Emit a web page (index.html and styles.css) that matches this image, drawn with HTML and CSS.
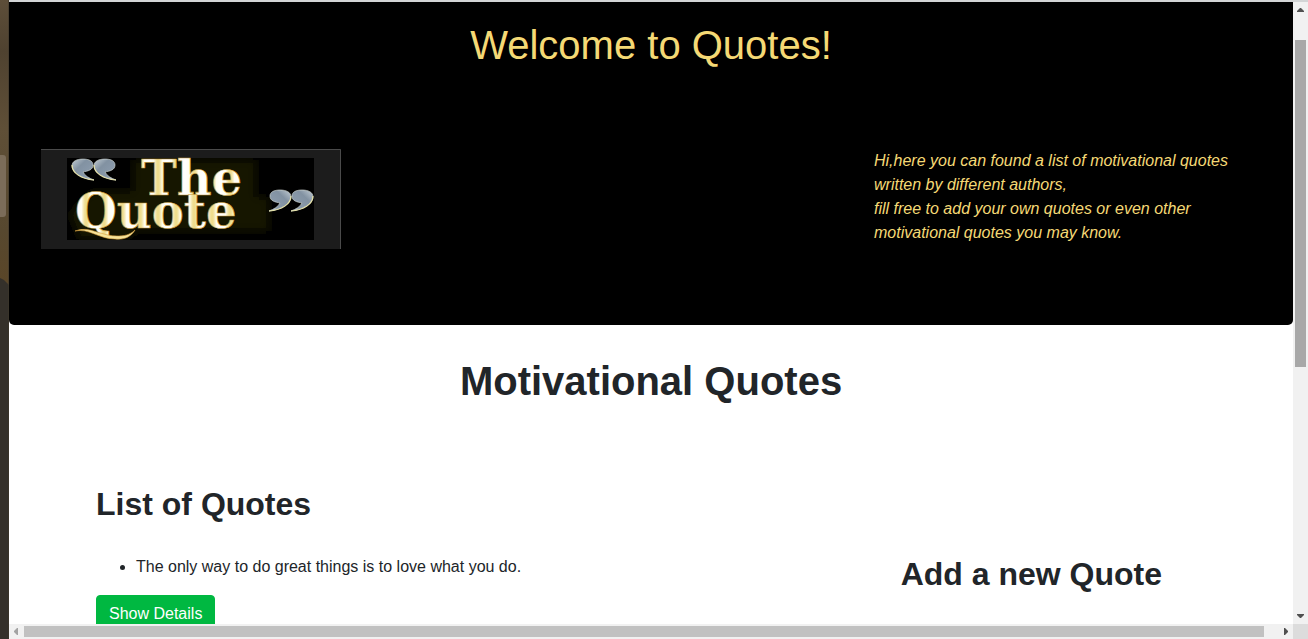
FILE: index.html
```html
<!DOCTYPE html>
<html lang="en">
<head>
<meta charset="utf-8">
<title>Quotes</title>
<link rel="stylesheet" href="styles.css">
</head>
<body>
<div class="desktop">
  <svg class="wallpaper" viewBox="0 0 9 639" preserveAspectRatio="none" aria-hidden="true">
    <defs>
      <linearGradient id="wall" x1="0" y1="0" x2="0" y2="1">
        <stop offset="0" stop-color="#5d4e39"/>
        <stop offset=".08" stop-color="#4f4230"/>
        <stop offset=".2" stop-color="#5f4f37"/>
        <stop offset=".36" stop-color="#57482f"/>
        <stop offset=".44" stop-color="#5a4628"/>
      </linearGradient>
    </defs>
    <rect width="9" height="639" fill="url(#wall)"/>
    <path d="M0 278L4 280L9 285V639H0Z" fill="#34302a"/>
    <path d="M0 155H3Q6 155 6 158V214Q6 217 3 217H0Z" fill="#7b6c59"/>
    <path d="M8 0H9V639H8Z" fill="#3e372b" opacity=".6"/>
  </svg>
  <div class="browser">
    <main class="page">
      <header class="hero">
        <h1 class="hero-title">Welcome to Quotes!</h1>
        <div class="hero-row">
          <svg class="logo" viewBox="0 0 300 100" role="img" aria-label="The Quote">
            <defs>
              <linearGradient id="gold" x1="0" y1="0" x2="9" y2="0" gradientUnits="userSpaceOnUse" spreadMethod="reflect">
                <stop offset="0" stop-color="#ffffff"/>
                <stop offset=".5" stop-color="#fffdf0"/>
                <stop offset=".8" stop-color="#f1e2a0"/>
                <stop offset="1" stop-color="#eedb88"/>
              </linearGradient>
              <linearGradient id="steel" x1="0" y1="0" x2="1" y2="1">
                <stop offset="0" stop-color="#c3cdd4"/>
                <stop offset=".35" stop-color="#8292a2"/>
                <stop offset=".75" stop-color="#8b9bac"/>
                <stop offset="1" stop-color="#e4e8ea"/>
              </linearGradient>
              <filter id="glow" x="-20%" y="-30%" width="140%" height="160%">
                <feGaussianBlur stdDeviation="4"/>
              </filter>
              <clipPath id="plate"><rect x="26" y="9" width="247" height="82"/></clipPath>
              <g id="mark">
                <path d="M1 8C1 3 6 1 12 1C18 1 22 3 22 7C22 12 17 13 12 14C14 18 18 20 23 22C12 21 1 15 1 8Z" fill="url(#steel)" stroke="#c9d0cb" stroke-width=".7"/>
                <path d="M1 7C1 15 10 21 23 22" fill="none" stroke="#e6e2a8" stroke-width="1.2"/>
              </g>
            </defs>
            <rect width="300" height="100" fill="#1c1c1c"/>
            <path d="M0 .5H299.5V100" fill="none" stroke="#4a4a4a"/>
            <rect x="26" y="9" width="247" height="82" fill="#000"/>
            <g clip-path="url(#plate)">
              <path d="M92 11H215V48H228V82H96L86 90H38L28 65L50 42H92Z" fill="#171602" filter="url(#glow)"/>
              <use href="#mark" x="30" y="9"/>
              <use href="#mark" x="52" y="9"/>
              <use href="#mark" transform="translate(251 40) scale(-1 1)"/>
              <use href="#mark" transform="translate(273 40) scale(-1 1)"/>
            </g>
            <g class="logo-text">
              <text x="100" y="46">The</text>
              <text x="34" y="79">Quote</text>
            </g>
            <path d="M34 82C48 76 61 88 78 87C86 87 91 84 94 81C90 88 83 91 74 90C58 90 48 79 34 82Z" fill="#f7e49a" stroke="#d39c3b" stroke-width=".6"/>
          </svg>
          <p class="intro">Hi,here you can found a list of motivational quotes written by different authors,<br>fill free to add your own quotes or even other motivational quotes you may know.</p>
        </div>
      </header>
      <h2 class="page-title">Motivational Quotes</h2>
      <div class="columns">
        <section class="quotes">
          <h3 class="section-title">List of Quotes</h3>
          <ul class="quote-list">
            <li>The only way to do great things is to love what you do.</li>
          </ul>
          <button class="details" type="button">Show Details</button>
        </section>
        <section class="new-quote">
          <h3 class="section-title">Add a new Quote</h3>
        </section>
      </div>
    </main>
    <div class="bar bar-vertical" aria-hidden="true">
      <svg class="arrow" viewBox="0 0 15 15"><path d="M4 10V9L7 6H8L11 9V10Z" fill="#505050"/></svg>
      <div class="track track-vertical"><div class="thumb thumb-vertical"></div></div>
      <svg class="arrow" viewBox="0 0 15 15"><path d="M4 5V6L7 9H8L11 6V5Z" fill="#505050"/></svg>
    </div>
    <div class="bar bar-horizontal" aria-hidden="true">
      <svg class="arrow" viewBox="0 0 15 15"><path d="M9 4H8L5 7V8L8 11H9Z" fill="#a3a3a3"/></svg>
      <div class="track track-horizontal"><div class="thumb thumb-horizontal"></div></div>
      <svg class="arrow" viewBox="0 0 15 15"><path d="M6 4H7L10 7V8L7 11H6Z" fill="#505050"/></svg>
    </div>
    <div class="corner"></div>
  </div>
</div>
</body>
</html>
```

FILE: styles.css
```css
* {
  box-sizing: border-box;
}

body {
  margin: 0;
  color: #212529;
  font: 16px/24px "Liberation Sans", Arial, sans-serif;
}

h1, h2, h3, p, ul {
  margin: 0;
}

.desktop {
  display: flex;
  height: 100vh;
  overflow: hidden;
}

.wallpaper {
  flex: none;
  width: 9px;
  height: 100%;
}

.browser {
  flex: 1;
  min-width: 0;
  display: grid;
  grid-template-columns: minmax(0, 1fr) 15px;
  grid-template-rows: minmax(0, 1fr) 15px;
  border-top: 2px solid #d3d5d6;
  background: #fff;
}

.page {
  overflow: hidden;
}

.hero {
  padding: 19px 32px 76px;
  background: #000;
  color: #f5d975;
  border-radius: 0 0 5px 5px;
}

.hero-title {
  font-size: 40px;
  font-weight: 400;
  line-height: 48px;
  text-align: center;
}

.hero-row {
  display: flex;
  align-items: flex-start;
  justify-content: space-between;
  margin-top: 80px;
}

.logo {
  flex: none;
  width: 300px;
  height: 100px;
}

.logo-text {
  font: 700 48px "DejaVu Serif", serif;
  fill: url(#gold);
  stroke: #c89a3c;
  stroke-width: 0.6px;
}

.intro {
  width: 387px;
  font-style: italic;
}

.page-title {
  margin-top: 32px;
  font-size: 40px;
  line-height: 48px;
  text-align: center;
}

.columns {
  display: flex;
  justify-content: space-between;
  margin-top: 80px;
  padding: 0 131px 0 87px;
}

.section-title {
  font-size: 32px;
  line-height: 38px;
}

.quote-list {
  margin: 32px 0 16px;
  padding-left: 40px;
}

.new-quote {
  margin-top: 70px;
}

.details {
  padding: 6px 12px;
  border: 1px solid #00b841;
  border-radius: 4px;
  background: #00b841;
  color: #fff;
  font: inherit;
}

.bar {
  display: flex;
  background: #f1f1f1;
}

.bar-vertical {
  grid-area: 1 / 2;
  flex-direction: column;
}

.bar-horizontal {
  grid-area: 2 / 1;
}

.arrow {
  flex: none;
  width: 15px;
  height: 15px;
}

.track {
  flex: 1;
  min-width: 0;
  min-height: 0;
}

.track-vertical {
  padding: 23px 2px 0;
}

.track-horizontal {
  padding: 2px 14px 2px 0;
}

.thumb-vertical {
  height: 57.5%;
  background: #a8a8a8;
}

.thumb-horizontal {
  width: 100%;
  height: 100%;
  background: #c1c1c1;
}

.corner {
  grid-area: 2 / 2;
  background: #dcdcdc;
}
```
